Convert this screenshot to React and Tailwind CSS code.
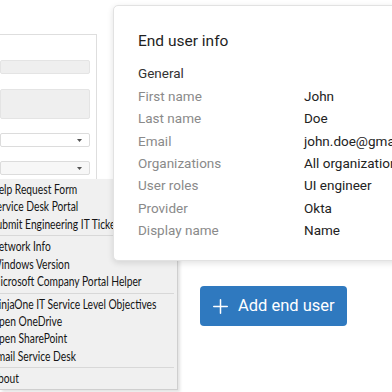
import React from "react";

const rows = [
  ["First name", "John"],
  ["Last name", "Doe"],
  ["Email", "john.doe@gmail.com"],
  ["Organizations", "All organizations"],
  ["User roles", "UI engineer"],
  ["Provider", "Okta"],
  ["Display name", "Name"],
];

const groups = [
  ["Help Request Form", "Service Desk Portal", "Submit Engineering IT Ticket"],
  ["Network Info", "Windows Version", "Microsoft Company Portal Helper"],
  ["NinjaOne IT Service Level Objectives", "Open OneDrive", "Open SharePoint", "Email Service Desk"],
  ["About"],
];

function Caret() {
  return (
    <svg width="5" height="3" viewBox="0 0 5 3" className="shrink-0">
      <path d="M0 0h5L2.5 3z" fill="#555" />
    </svg>
  );
}

export default function App() {
  return (
    <div className="relative w-[392px] h-[392px] overflow-hidden bg-white flex" style={{ fontFamily: "Roboto, Inter, sans-serif" }}>
      {/* left form panel (partially off-screen) */}
      <div className="w-[96px] shrink-0 mt-[34px] h-[160px] -ml-[60px] pl-[60px] border-t border-r border-[#dedede] box-content">
        <div className="flex flex-col pt-[25px] pr-[6px] gap-[15px]">
          <div className="h-[14px] bg-[#efefef] border border-[#e4e4e4] rounded-[2px]" />
          <div className="h-[30px] bg-[#efefef] border border-[#e4e4e4] rounded-[2px] -mb-[1px]" />
          <div className="h-[14px] bg-white border border-[#dcdcdc] rounded-[2px] flex items-center justify-end pr-[7px]"><Caret /></div>
          <div className="h-[14px] bg-[#f7f7f7] border border-[#dcdcdc] rounded-[2px] flex items-center justify-end pr-[7px] -mt-[1px]"><Caret /></div>
        </div>
      </div>

      {/* main content */}
      <div className="flex-1 pt-[286px] pl-[103px]">
        <button className="flex items-center gap-[10px] h-[40px] w-[147px] pl-[13px] rounded-[4px] bg-[#2f79bf] text-white text-[16.5px]">
          <svg width="15" height="15" viewBox="0 0 15 15" fill="none" stroke="white" strokeWidth="1.5" strokeLinecap="round">
            <path d="M7.5 0.75v13.5M0.75 7.5h13.5" />
          </svg>
          <span>Add end user</span>
        </button>
      </div>

      {/* context menu */}
      <div
        className="absolute left-0 top-[179px] w-[178px] h-[211px] bg-[#f0f0f0] border-r border-b border-[#cfcfcf] shadow-[2px_2px_3px_rgba(0,0,0,0.12)] pt-[2px] overflow-hidden text-[12.5px] text-[#151515]"
        style={{ fontFamily: "Lato, 'Noto Sans', sans-serif" }}
      >
        {groups.map((g, gi) => (
          <div key={gi}>
            {gi > 0 && <div className="h-[5.5px] flex items-center pr-[3px]"><div className="h-px w-full bg-[#d8d8d8]" /></div>}
            {g.map((t) => (
              <div key={t} className="h-[17.3px] leading-[17.3px] -ml-[9px] whitespace-nowrap">
                <span className="inline-block origin-left scale-x-[0.82]">{t}</span>
              </div>
            ))}
          </div>
        ))}
      </div>

      {/* end user info popover */}
      <div className="absolute left-[113px] top-[5px] w-[300px] h-[256px] bg-white rounded-[5px] border border-[#e2e2e2] shadow-[0_2px_6px_rgba(0,0,0,0.12)] pl-[24px] pt-[23px]">
        <div className="text-[15.5px] leading-[24px] text-[#1f1f1f]">End user info</div>
        <div className="mt-[9px] text-[13.5px] leading-[22px] text-[#333]">General</div>
        <div className="mt-[1px]">
          {rows.map(([k, v]) => (
            <div key={k} className="flex h-[22.3px] items-center text-[13.5px] whitespace-nowrap">
              <div className="w-[166px] shrink-0 text-[#8a8a8a]">{k}</div>
              <div className="text-[#222]">{v}</div>
            </div>
          ))}
        </div>
      </div>
    </div>
  );
}
